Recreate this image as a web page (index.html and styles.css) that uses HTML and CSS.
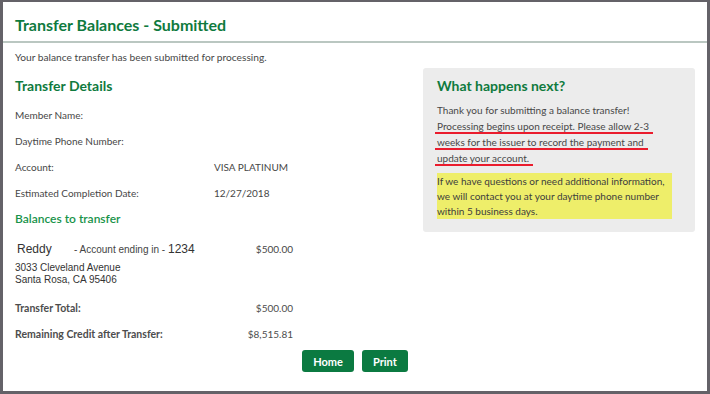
FILE: index.html
```html
<!DOCTYPE html>
<html lang="en">
<head>
    <meta charset="UTF-8">
    <meta name="viewport" content="width=device-width, initial-scale=1">
    <title>Transfer Balances - Submitted</title>
    <link rel="stylesheet" href="styles.css">
</head>
<body>
<div class="frame">
    <h1 class="page-title">Transfer Balances - Submitted</h1>
    <p class="intro">Your balance transfer has been submitted for processing.</p>
    <div class="main">
        <div class="details">
            <h2 class="section-title">Transfer Details</h2>
            <div class="row"><span class="label">Member Name:</span><span class="value"></span></div>
            <div class="row"><span class="label">Daytime Phone Number:</span><span class="value"></span></div>
            <div class="row"><span class="label">Account:</span><span class="value">VISA PLATINUM</span></div>
            <div class="row"><span class="label">Estimated Completion Date:</span><span class="value">12/27/2018</span></div>
            <h3 class="sub-title">Balances to transfer</h3>
            <div class="balance">
                <span class="payee">Reddy</span>
                <span class="ending">- Account ending in - <b>1234</b></span>
                <span class="amount">$500.00</span>
            </div>
            <div class="address">3033 Cleveland Avenue<br>Santa Rosa, CA 95406</div>
            <div class="total first"><span>Transfer Total:</span><span class="amount">$500.00</span></div>
            <div class="total"><span>Remaining Credit after Transfer:</span><span class="amount">$8,515.81</span></div>
        </div>
        <div class="next-box">
            <h2 class="section-title">What happens next?</h2>
            <div class="next-text">
                <div>Thank you for submitting a balance transfer!</div>
                <div><span class="mark">Processing begins upon receipt. Please allow 2-3</span></div>
                <div><span class="mark">weeks for the issuer to record the payment and</span></div>
                <div><span class="mark">update your account.</span></div>
            </div>
            <div class="highlight">
                If we have questions or need additional information,<br>
                we will contact you at your daytime phone number<br>
                within 5 business days.
            </div>
        </div>
    </div>
    <div class="buttons">
        <button class="btn">Home</button>
        <button class="btn">Print</button>
    </div>
</div>
</body>
</html>
```

FILE: styles.css
```css
* {
    box-sizing: border-box;
}
body {
    margin: 0;
    font-family: Lato, "Open Sans", sans-serif;
    color: #474747;
    background: #fff;
}
.frame {
    height: 394px;
    border-style: solid;
    border-color: #646268;
    border-width: 2px 3px 3px 3px;
}
.page-title {
    margin: 0;
    padding: 11px 12px 0;
    height: 41px;
    font-size: 16px;
    line-height: 24px;
    font-weight: 700;
    color: #0f7a3e;
    border-bottom: 2px solid #bac7c1;
}
.intro {
    margin: 7px 12px 0;
    font-size: 10.2px;
    line-height: 14px;
}
.main {
    display: flex;
    justify-content: space-between;
    padding: 4px 12px 0;
}
.details {
    width: 278px;
    font-size: 10px;
}
.section-title {
    margin: 0;
    font-size: 14px;
    line-height: 20px;
    font-weight: 700;
    color: #0f7a3e;
}
.details .section-title {
    margin-top: 8px;
    margin-bottom: 6px;
}
.row {
    display: flex;
    line-height: 26px;
}
.label {
    width: 199px;
}
.sub-title {
    margin: 0;
    font-size: 12px;
    line-height: 26px;
    font-weight: 600;
    color: #18934a;
}
.balance {
    display: flex;
    align-items: baseline;
    margin-top: 7px;
    line-height: 20px;
    font-family: "Liberation Sans", Arial, sans-serif;
}
.payee {
    width: 59px;
    padding-left: 2px;
    font-size: 12px;
    color: #333;
}
.ending {
    font-size: 10px;
    color: #444;
}
.ending b {
    font-size: 12px;
    font-weight: 400;
    color: #333;
}
.amount {
    margin-left: auto;
    font-family: Lato, "Open Sans", sans-serif;
    font-size: 10px;
    font-weight: 400;
}
.address {
    margin-top: 2px;
    font-family: "Liberation Sans", Arial, sans-serif;
    font-size: 10px;
    line-height: 12px;
    color: #333;
}
.total {
    display: flex;
    line-height: 26px;
    font-size: 10.5px;
    font-weight: 700;
    color: #4d4d4d;
}
.total.first {
    margin-top: 9px;
}
.next-box {
    width: 272px;
    height: 164px;
    padding: 8px 23px 0 14px;
    background: #ececec;
    border-radius: 3px;
}
.next-text {
    margin-top: 6px;
    font-size: 10px;
    line-height: 16px;
    white-space: nowrap;
}
.mark {
    border-bottom: 2px solid #ea1c2d;
    margin-left: -2px;
    padding-left: 2px;
    padding-right: 4px;
}
.highlight {
    margin-top: 7px;
    padding-top: 1px;
    background: #eeee6a;
    font-size: 10px;
    line-height: 15px;
    white-space: nowrap;
    color: #3d3d3d;
}
.buttons {
    display: flex;
    justify-content: center;
    gap: 8px;
    margin-top: 3px;
}
.btn {
    height: 22px;
    padding: 0 11px;
    border: none;
    border-radius: 3px;
    background: #0b7a41;
    color: #fff;
    font-family: Lato, "Open Sans", sans-serif;
    font-size: 11px;
    font-weight: 700;
}
```
